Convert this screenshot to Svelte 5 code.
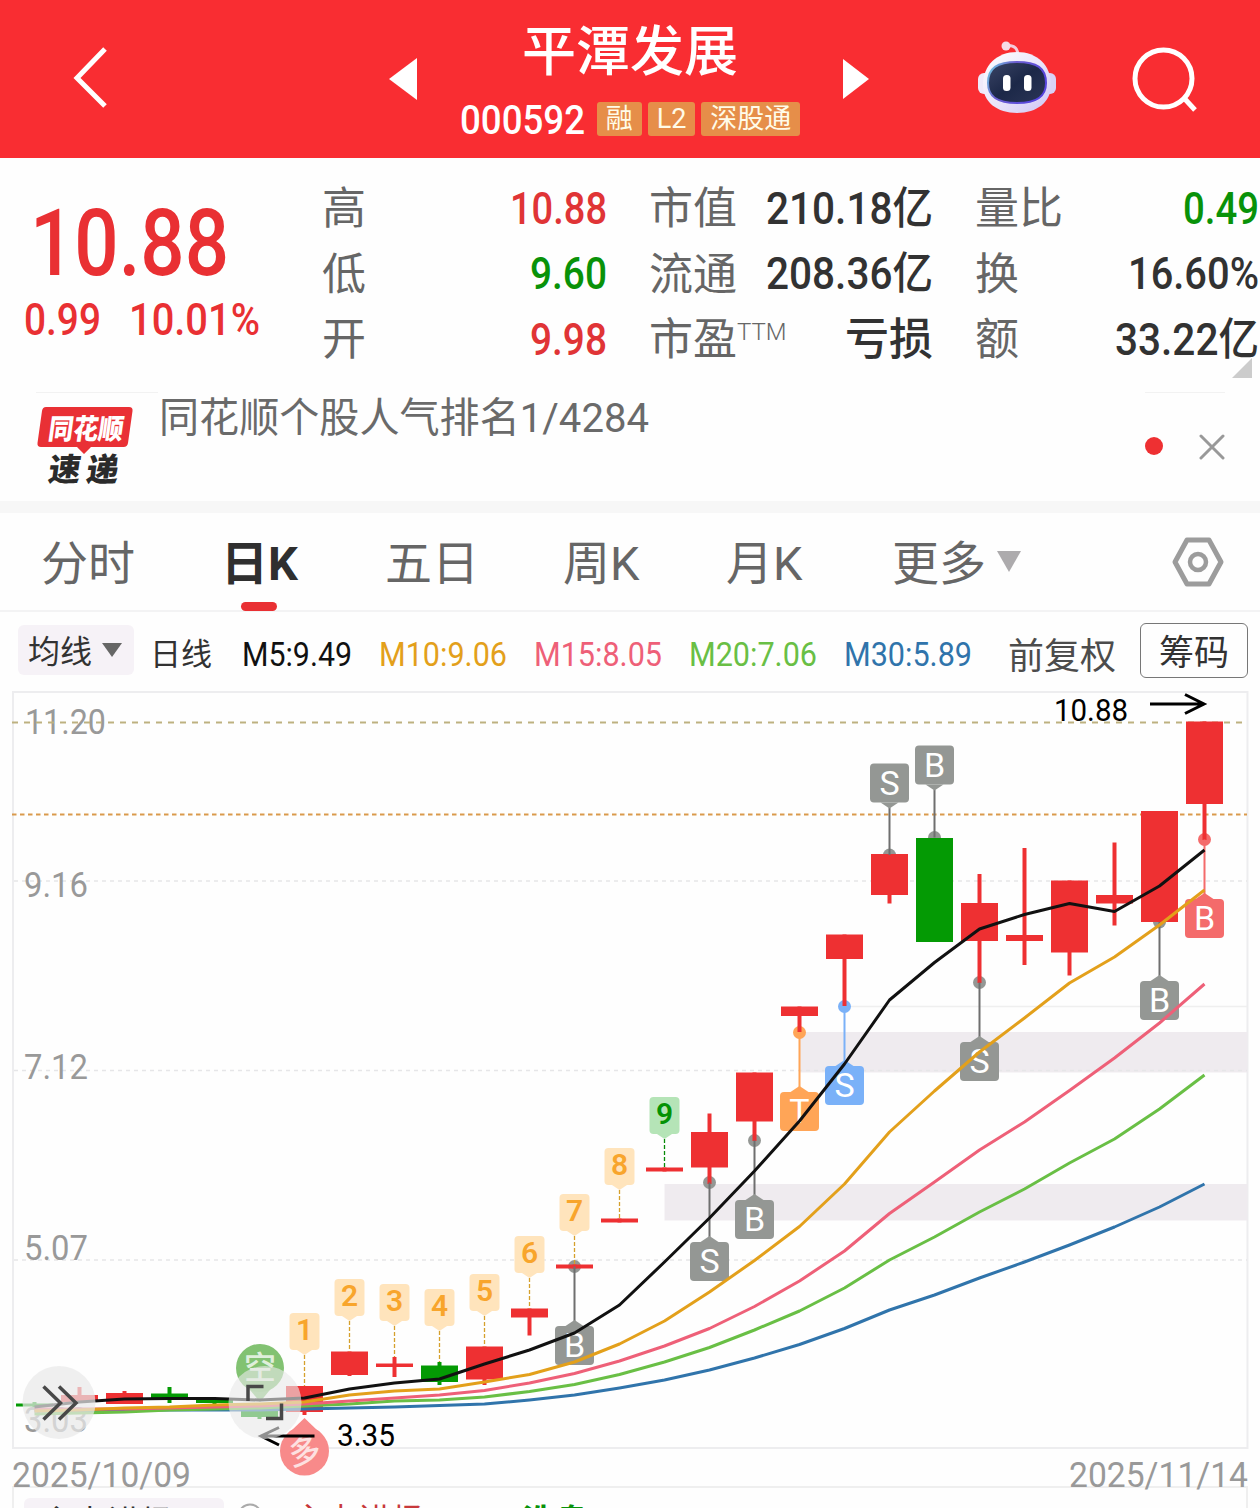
<script>
	const rows = [
		[
			{ label: '高', value: '10.88', width: 97, color: 'red' },
			{ label: '市值', value: '210.18亿', width: 167, color: 'dark' },
			{ label: '量比', value: '0.49', width: 76, color: 'green' }
		],
		[
			{ label: '低', value: '9.60', width: 77, color: 'green' },
			{ label: '流通', value: '208.36亿', width: 167, color: 'dark' },
			{ label: '换', value: '16.60%', width: 131, color: 'dark' }
		],
		[
			{ label: '开', value: '9.98', width: 77, color: 'red' },
			{ label: '市盈', sup: 'TTM', value: '亏损', width: 88, color: 'dark' },
			{ label: '额', value: '33.22亿', width: 144, color: 'dark' }
		]
	];

	const tabs = ['分时', '日K', '五日', '周K', '月K', '更多'];
	let active = $state('日K');

	const averages = [
		{ text: 'M5:9.49', width: 110, color: '#111111' },
		{ text: 'M10:9.06', width: 128, color: '#e3a01b' },
		{ text: 'M15:8.05', width: 128, color: '#ee6078' },
		{ text: 'M20:7.06', width: 128, color: '#69bf45' },
		{ text: 'M30:5.89', width: 128, color: '#3074ab' }
	];

	// x of the n-th trading day
	const px = (i) => 34.5 + i * 45;

	// [body top, body bottom, high, low, falling]
	const candles = [
		[1403.5, 1406.5, 1402, 1407, 1],
		[1395, 1402, 1387, 1402],
		[1393, 1404, 1391, 1404],
		[1393.5, 1398, 1387, 1403, 1],
		[1399, 1403, 1399, 1404, 1],
		[1404, 1417, 1404, 1419, 1],
		[1386, 1412, 1386, 1415],
		[1351.5, 1375, 1351.5, 1376],
		[1363.5, 1367, 1357, 1377],
		[1365.5, 1382, 1362, 1385, 1],
		[1346.5, 1379.5, 1346.5, 1385],
		[1308.5, 1317.5, 1308.5, 1335.5],
		[1264.5, 1268.5, 1264.5, 1268.5],
		[1218.5, 1222.5, 1218.5, 1222.5],
		[1167.5, 1171.5, 1167.5, 1171.5],
		[1132, 1167.5, 1113.5, 1184],
		[1072.5, 1121.5, 1072.5, 1141],
		[1006.5, 1016, 1006.5, 1032],
		[934.5, 959, 934.5, 1006],
		[854, 895, 854, 903.5],
		[838, 942, 838, 942, 1],
		[903, 941, 874, 983],
		[935, 941, 848, 965],
		[880.5, 952.5, 880.5, 975.5],
		[895, 903.5, 842.5, 925.5],
		[811, 922, 811, 922],
		[721.5, 804, 721.5, 840]
	];

	const lines = [
		{
			color: '#3074ab',
			ys: [1411, 1411, 1410.5, 1410, 1410, 1410, 1409, 1408, 1407, 1405.5, 1404, 1400, 1395, 1388, 1380, 1370, 1358, 1344.5, 1328.5, 1310, 1295, 1278, 1262, 1245, 1227, 1207, 1184]
		},
		{
			color: '#69bf45',
			ys: [1414, 1413, 1412, 1410, 1409, 1408, 1406, 1404, 1401, 1400, 1397, 1391.5, 1384.5, 1374.5, 1362, 1347.5, 1330, 1311, 1288, 1260, 1237, 1212, 1189, 1163, 1139, 1109, 1075]
		},
		{
			color: '#ee6078',
			ys: [1409, 1409, 1409, 1408, 1407, 1406, 1404, 1401, 1398, 1395, 1390.5, 1383, 1373.5, 1361, 1346, 1328.5, 1306.5, 1281, 1251, 1213.5, 1182, 1150, 1122, 1090.5, 1058, 1023, 984]
		},
		{
			color: '#e3a01b',
			ys: [1411, 1410, 1408, 1407, 1405, 1404, 1402, 1395, 1391, 1389, 1382, 1374.5, 1362, 1344, 1321, 1292, 1260.5, 1226.5, 1184, 1132, 1091, 1052, 1018, 983, 957, 925, 890]
		},
		{
			color: '#111111',
			ys: [1407, 1402, 1399, 1398.5, 1398.5, 1400, 1398, 1389, 1383, 1379, 1364, 1350, 1333, 1305, 1262, 1218, 1171, 1121, 1064, 1000, 962.5, 929, 914.5, 903.5, 911.5, 886, 850]
		}
	];

	const counts = [1313, 1279, 1284, 1289, 1274, 1236, 1194, 1148, 1097];

	const GRAY = '#949794';
	const trades = [
		{ day: 12, text: 'B', dot: 1266.5, top: 1326, color: GRAY },
		{ day: 15, text: 'S', dot: 1182.5, top: 1242, color: GRAY },
		{ day: 16, text: 'B', dot: 1140.5, top: 1200, color: GRAY },
		{ day: 17, text: 'T', dot: 1032.5, top: 1092, color: '#ffa557' },
		{ day: 18, text: 'S', dot: 1006.5, top: 1066, color: '#7ab1f8' },
		{ day: 19, text: 'S', dot: 855, top: 763.5, color: GRAY },
		{ day: 20, text: 'B', dot: 837.5, top: 745.5, color: GRAY },
		{ day: 21, text: 'S', dot: 982.5, top: 1042, color: GRAY },
		{ day: 25, text: 'B', dot: 922, top: 981, color: GRAY },
		{ day: 26, text: 'B', dot: 839.5, top: 899, color: '#f46b6b' }
	];

	const scale = [
		{ text: '11.20', y: 734, x: 25, width: 81 },
		{ text: '9.16', y: 897, x: 24, width: 64 },
		{ text: '7.12', y: 1079, x: 24, width: 64 },
		{ text: '5.07', y: 1260, x: 24, width: 64 },
		{ text: '3.03', y: 1432, x: 24, width: 64 }
	];
</script>

{#snippet fit(text, width, size)}
	<svg class="fit" {width} height={size} style:font-size="{size * 1.02}px">
		<text x="0" y={size * 0.87} textLength={width} lengthAdjust="spacingAndGlyphs">{text}</text>
	</svg>
{/snippet}

<div class="page">
	<header>
		<svg class="back" width="40" height="64" viewBox="0 0 40 64">
			<path d="M35 3 7 32 35 60" fill="none" stroke="#fff" stroke-width="5" />
		</svg>
		<div class="stock">
			<svg width="28" height="42" viewBox="0 0 28 42"><path d="M0 21 28 0V42Z" fill="#fff" /></svg>
			<div class="names">
				<h1>平潭发展</h1>
				<div class="code">
					<span class="digits">{@render fit('000592', 125, 40)}</span>
					<span class="tag">融</span>
					<span class="tag">L2</span>
					<span class="tag">深股通</span>
				</div>
			</div>
			<svg width="26" height="40" viewBox="0 0 26 40"><path d="M26 20 0 0V40Z" fill="#fff" /></svg>
		</div>
		<div class="tools">
			<svg width="80" height="76" viewBox="0 0 80 76">
				<defs>
					<linearGradient id="shell" x1="0" y1="0" x2="1" y2="1">
						<stop offset="0" stop-color="#fff" />
						<stop offset=".55" stop-color="#e9e3fa" />
						<stop offset="1" stop-color="#cdc5f4" />
					</linearGradient>
					<linearGradient id="rim" x1="0" y1="0" x2="1" y2=".4">
						<stop offset="0" stop-color="#71d3e0" />
						<stop offset=".4" stop-color="#6c5fd0" />
						<stop offset="1" stop-color="#5644dd" />
					</linearGradient>
					<linearGradient id="glass" x1="0" y1="0" x2="1" y2="1">
						<stop offset="0" stop-color="#3b4566" />
						<stop offset=".5" stop-color="#1c2848" />
						<stop offset="1" stop-color="#2b3556" />
					</linearGradient>
				</defs>
				<path d="M29 5.500q11-1 11 11" fill="none" stroke="#f4c9da" stroke-width="3" />
				<circle cx="28" cy="6" r="4.500" fill="#f6dbe8" />
				<rect x="0" y="33" width="14" height="21" rx="6" fill="#efeafa" />
				<rect x="64" y="33" width="14" height="21" rx="6" fill="#d9d1f6" />
				<path d="M39 12c20 0 34 13 34 33 0 17-14 28-34 28S5 62 5 45C5 25 19 12 39 12Z" fill="url(#shell)" />
				<path d="M39 22c20 0 29 6 29 21 0 13-8 20-29 20s-29-7-29-20c0-15 9-21 29-21Z" fill="url(#glass)" stroke="url(#rim)" stroke-width="2" />
				<rect x="25" y="35" width="7.500" height="16" rx="3.500" fill="#fff" />
				<rect x="46" y="35" width="7.500" height="16" rx="3.500" fill="#fff" />
			</svg>
			<svg width="66" height="66" viewBox="0 0 66 66" fill="none" stroke="#fff" stroke-width="5">
				<circle cx="31.500" cy="31.500" r="28.500" />
				<path d="M52 51 63 63" />
			</svg>
		</div>
	</header>

	<section class="quote">
		<div class="price">
			<div class="big">{@render fit('10.88', 199, 91)}</div>
			<div class="change">
				{@render fit('0.99', 77, 44)}
				{@render fit('10.01%', 131, 44)}
			</div>
		</div>
		<div class="stats">
			{#each rows as row}
				{#each row as cell}
					<div class="cell">
						<span class="label">{cell.label}{#if cell.sup}<sup>{cell.sup}</sup>{/if}</span>
						<span class={cell.color}>{@render fit(cell.value, cell.width, 44)}</span>
					</div>
				{/each}
			{/each}
		</div>
		<i class="corner"></i>
	</section>

	<section class="news">
		<svg class="logo" width="98" height="84" viewBox="0 0 98 84">
			<path d="M10 2H93q4 0 3.500 4L92 38q-.6 4-4.500 4H55l-7 7-7-7H5q-4 0-3.500-4L6 6q.6-4 4-4Z" fill="#e93035" />
			<text class="brand" transform="skewX(-8)" x="16" y="34" textLength="75" lengthAdjust="spacingAndGlyphs" fill="#fff" font-size="28">同花顺</text>
			<text class="brand" transform="skewX(-8)" x="22" y="76" fill="#2b2b2b" font-size="32">速</text>
			<text class="brand" transform="skewX(-8)" x="60" y="76" fill="#2b2b2b" font-size="32">递</text>
		</svg>
		<p>{@render fit('同花顺个股人气排名1/4284', 490, 40)}</p>
		<i class="dot"></i>
		<svg class="close" width="26" height="28" viewBox="0 0 26 28">
			<path d="M2 3 24 25M24 3 2 25" stroke="#999" stroke-width="3" stroke-linecap="round" />
		</svg>
	</section>

	<nav>
		{#each tabs as tab}
			<button class:active={tab === active} onclick={() => (active = tab)}>{tab}</button>
		{/each}
		<i class="more"></i>
		<svg class="gear" width="54" height="52" viewBox="0 0 54 52" fill="none" stroke="#9c9c9c" stroke-width="5" stroke-linejoin="round">
			<path d="M16 4H38L50 26 38 48H16L4 26Z" />
			<circle cx="27" cy="26" r="8" stroke-width="4.500" />
		</svg>
	</nav>

	<div class="legend">
		<button class="kind">均线<i></i></button>
		<span class="period">日线</span>
		<div class="averages">
			{#each averages as a}
				<span style:color={a.color}>{@render fit(a.text, a.width, 33)}</span>
			{/each}
		</div>
		<span class="adjust">前复权</span>
		<button class="chips">筹码</button>
	</div>

	<svg class="chart" width="1260" height="758" viewBox="0 691 1260 758">
		<rect x="13" y="692" width="1234.500" height="756" fill="none" stroke="#ededef" stroke-width="2" />
		<rect x="799.500" y="1032" width="448" height="40.500" fill="#efebef" />
		<rect x="664.500" y="1184" width="583" height="36.500" fill="#efebef" />
		<path d="M844.500 1006.500H1247" stroke="#efefef" stroke-width="1.500" />
		{#each [881, 1070.5, 1260] as y}
			<path d="M14 {y}H1247" stroke="#e6e6e8" stroke-width="1.500" stroke-dasharray="4 4" />
		{/each}

		{#each scale as s}
			<text class="scale" x={s.x} y={s.y} textLength={s.width} lengthAdjust="spacingAndGlyphs">{s.text}</text>
		{/each}
		<path d="M12 722.500H1247" stroke="#bdb180" stroke-width="2" stroke-dasharray="6 6" />
		<path d="M12 814.500H1247" stroke="#d99a4c" stroke-width="2" stroke-dasharray="4.500 3.500" />
		<text class="mark" x="1054" y="721" textLength="74" lengthAdjust="spacingAndGlyphs">10.88</text>
		<path d="M1150 704H1203M1185 694.500 1204 704 1185 713.500" fill="none" stroke="#000" stroke-width="3" />

		{#each trades as t}
			<circle cx={px(t.day)} cy={t.dot} r="6.500" fill={t.color} />
		{/each}

		{#each candles as [top, bottom, high, low, falling], i}
			<g fill={falling ? '#049a04' : '#ee3032'}>
				<rect x={px(i) - 2} y={high} width="4" height={low - high} />
				<rect x={px(i) - 18.5} y={top} width="37" height={bottom - top} />
			</g>
		{/each}

		{#each counts as top, i}
			{@const x = px(i + 6)}
			{@const last = i === 8}
			<g fill={last ? '#b5e4b7' : '#ffe4bc'}>
				<rect x={x - 15} y={top} width="30" height="37" rx="4" />
				<path d="M{x - 9} {top + 36}h18l-9 6Z" />
			</g>
			<path d="M{x} {top + 42}V{candles[i + 6][2]}" stroke={last ? '#078a07' : '#d5a02c'} stroke-width="1.300" stroke-dasharray="4 2" />
			<text class="count" {x} y={top + 27} fill={last ? '#049204' : '#f8a52c'}>{i + 1}</text>
		{/each}

		{#each trades as t}
			{@const x = px(t.day)}
			{@const above = t.top < t.dot}
			<path d="M{x} {t.dot}V{above ? t.top + 44 : t.top - 5}" stroke={t.color === GRAY ? '#6f6f6f' : t.color} stroke-width="2" />
			<rect x={x - 19.5} y={t.top} width="39" height="39" rx="4" fill={t.color} />
			<path d={above ? `M${x - 9} ${t.top + 39}h18l-9 6Z` : `M${x - 9} ${t.top}h18l-9 -6Z`} fill={t.color} />
			<text class="trade" {x} y={t.top + 31}>{t.text}</text>
		{/each}

		<g>
			<path d="M237 1374 260 1402 283 1374Z" fill="#8cc87e" />
			<circle cx="260" cy="1368" r="24" fill="#82c272" />
			<text class="side" x="260" y="1379">空</text>
			<path d="M291 1431 304.500 1418 318 1431Z" fill="#f88a8a" />
			<circle cx="304.500" cy="1451" r="24.500" fill="#f88a8a" />
			<text class="side" x="304.500" y="1463" transform="rotate(-12 304.500 1451)">多</text>
		</g>

		{#each lines as line}
			<polyline points={line.ys.map((y, i) => `${px(i)},${y}`).join(' ')} fill="none" stroke={line.color} stroke-width="3" stroke-linejoin="round" />
		{/each}

		<path d="M314.500 1436H262M279 1427.500 261 1436 279 1445" fill="none" stroke="#000" stroke-width="3" />
		<text class="mark" x="337" y="1446" textLength="58" lengthAdjust="spacingAndGlyphs">3.35</text>

		<circle cx="59" cy="1402.500" r="36.500" fill="#e9e9e9" fill-opacity=".72" />
		<circle cx="265" cy="1402.500" r="36.500" fill="#e9e9e9" fill-opacity=".62" />
		<g fill="none" stroke="#484848" stroke-width="3.500">
			<path d="M43.500 1386.500 60.500 1403 43.500 1419.500M59 1386.500 76 1403 59 1419.500" />
			<path d="M248 1401V1386.500H263.500M281.500 1403.500V1418.500H266" />
		</g>
	</svg>

	<div class="dates">
		{@render fit('2025/10/09', 179, 34)}
		{@render fit('2025/11/14', 179, 34)}
	</div>

	<div class="sub">
		<span class="pick">主力进场</span>
		<svg class="help" width="26" height="26" viewBox="0 0 26 26"><circle cx="13" cy="13" r="11.500" fill="none" stroke="#aaa" stroke-width="2" /></svg>
		<span class="in">主力进场</span>
		<span class="out">洗盘</span>
	</div>
</div>

<style>
	:global(body) {
		margin: 0;
		background: #fefefe;
	}

	.page {
		width: 1260px;
		height: 1508px;
		overflow: hidden;
		background: #fefefe;
		color: #323232;
		font-family: Roboto, 'Noto Sans CJK SC', sans-serif;
		line-height: 1.2;
	}

	svg {
		display: block;
		flex: none;
	}

	.fit {
		overflow: visible;
		fill: currentColor;
	}

	button {
		padding: 0;
		border: 0;
		background: none;
		font: inherit;
		color: inherit;
	}

	header {
		display: flex;
		justify-content: space-between;
		height: 158px;
		box-sizing: border-box;
		padding: 0 62px 0 70px;
		background: #f92d32;
		color: #fff;
	}

	.back {
		margin-top: 46px;
	}

	.stock {
		display: flex;
		align-items: center;
		justify-content: space-between;
		width: 480px;
		margin-left: 170px;
	}

	.names {
		display: flex;
		flex-direction: column;
		align-items: center;
		gap: 13px;
		height: 118px;
	}

	h1 {
		margin: 0;
		font-size: 54px;
		line-height: 66px;
		font-weight: 500;
	}

	.code {
		display: flex;
		align-items: center;
		gap: 6px;
	}

	.digits {
		margin-right: 6px;
		font-weight: 500;
	}

	.tag {
		padding: 0 9px;
		border-radius: 3px;
		background: #e68e49;
		color: #fffbe8;
		font-size: 27px;
		line-height: 34px;
	}

	.tools {
		display: flex;
		gap: 74px;
		padding-top: 40px;
	}

	.tools svg:last-child {
		margin-top: 7px;
	}

	.quote {
		position: relative;
		display: flex;
		height: 234px;
	}

	.price {
		width: 323px;
		flex: none;
		color: #e93033;
		font-weight: 500;
	}

	.big {
		margin: 38px 0 0 30px;
	}

	.change {
		display: flex;
		gap: 28px;
		margin: 10px 0 0 24px;
	}

	.stats {
		display: grid;
		grid-template-columns: 284px 283px 283px;
		grid-auto-rows: 65.5px;
		column-gap: 43px;
		padding-top: 17px;
	}

	.cell {
		display: flex;
		align-items: center;
		justify-content: space-between;
	}

	.cell > span:last-child {
		font-weight: 500;
	}

	.label {
		margin-left: -1px;
		padding-top: 4px;
		color: #666;
		font-size: 44px;
		line-height: 61px;
		white-space: nowrap;
	}

	sup {
		font-size: 24px;
		line-height: 0;
		vertical-align: 15px;
		font-weight: 300;
	}

	.red {
		color: #e03436;
	}

	.green {
		color: #099209;
	}

	.corner {
		position: absolute;
		right: 8px;
		bottom: 14px;
		width: 20px;
		height: 20px;
		background: #ccc;
		clip-path: polygon(100% 0, 100% 100%, 0 100%);
	}

	.news {
		display: flex;
		height: 109px;
		border-bottom: 12px solid #f7f7f7;
		background:
			linear-gradient(#f2f2f2, #f2f2f2) 36px 0 / 122px 1px no-repeat,
			linear-gradient(#f2f2f2, #f2f2f2) 1145px 0 / 80px 1px no-repeat;
	}

	.logo {
		margin: 13px 0 0 36px;
	}

	.brand {
		font-weight: 900;
	}

	p {
		margin: 5px 0 0 25px;
		color: #6a6a6a;
	}

	.dot {
		width: 18px;
		height: 18px;
		margin: 45px 36px 0 auto;
		border-radius: 50%;
		background: #ee3032;
	}

	.close {
		margin: 41px 35px 0 0;
	}

	nav {
		display: grid;
		grid-template-columns: 180px 164px 178px 163px 166px 104px auto 1fr;
		align-items: center;
		justify-items: start;
		height: 97px;
		padding-left: 41px;
		border-bottom: 2px solid #f3f3f4;
	}

	nav button {
		position: relative;
		height: 97px;
		padding-top: 5px;
		font-size: 47px;
		color: #666;
	}

	nav .active {
		color: #2f2f2f;
		font-weight: 700;
	}

	nav .active::after {
		content: '';
		position: absolute;
		left: 50%;
		bottom: -1px;
		width: 36px;
		height: 9px;
		margin-left: -18px;
		border-radius: 5px;
		background: #e93033;
	}

	.more {
		width: 24px;
		height: 21px;
		margin-left: 1px;
		background: #adabad;
		clip-path: polygon(0 0, 100% 0, 50% 100%);
	}

	.gear {
		justify-self: end;
		margin-right: 35px;
	}

	.legend {
		display: flex;
		align-items: center;
		height: 79px;
		padding: 0 12px 0 18px;
	}

	.kind {
		display: flex;
		align-items: center;
		gap: 10px;
		width: 116px;
		height: 50px;
		box-sizing: border-box;
		margin-bottom: 4px;
		padding: 6px 0 0 10px;
		border-radius: 6px;
		background: #f6f2f7;
		font-size: 32px;
	}

	.kind i {
		width: 20px;
		height: 14px;
		margin-bottom: 5px;
		background: #666;
		clip-path: polygon(0 0, 100% 0, 50% 100%);
	}

	.period {
		margin: 6px 30px 0 16px;
		font-size: 31px;
	}

	.averages {
		display: flex;
		gap: 27px;
		margin-top: 4px;
	}

	.adjust {
		margin: 12px 0 0 auto;
		padding-right: 24px;
		font-size: 36px;
		color: #4c4c4c;
	}

	.chips {
		width: 108px;
		height: 55px;
		box-sizing: border-box;
		margin-bottom: 2px;
		padding-top: 7px;
		border: 1.5px solid #777;
		border-radius: 6px;
		font-size: 35px;
		line-height: 46px;
	}

	.chart {
		overflow: visible;
	}

	.scale {
		fill: #999;
		font-size: 35px;
	}

	.mark {
		fill: #000;
		font-size: 31px;
	}

	.count {
		font-size: 30px;
		font-weight: 600;
		text-anchor: middle;
	}

	.trade {
		fill: #fff;
		font-size: 34px;
		text-anchor: middle;
	}

	.side {
		fill: #fff;
		fill-opacity: 0.75;
		font-size: 32px;
		font-weight: 500;
		text-anchor: middle;
	}

	.dates {
		display: flex;
		justify-content: space-between;
		height: 29px;
		padding: 8px 12px 0;
		color: #999;
	}

	.sub {
		display: flex;
		align-items: flex-start;
		height: 60px;
		margin: 0 12px;
		padding: 10px 10px 0;
		border: 2px solid #efefef;
		border-bottom: 0;
		font-size: 33px;
		line-height: 50px;
	}

	.pick {
		width: 200px;
		height: 50px;
		box-sizing: border-box;
		padding-left: 18px;
		border-radius: 6px;
		background: #f6f2f7;
	}

	.help {
		margin: 5px 0 0 13px;
	}

	.in {
		margin-left: 30px;
		color: #c8393b;
		line-height: 46px;
	}

	.out {
		margin-left: 97px;
		color: #099209;
		font-weight: 700;
		line-height: 48px;
	}
</style>
